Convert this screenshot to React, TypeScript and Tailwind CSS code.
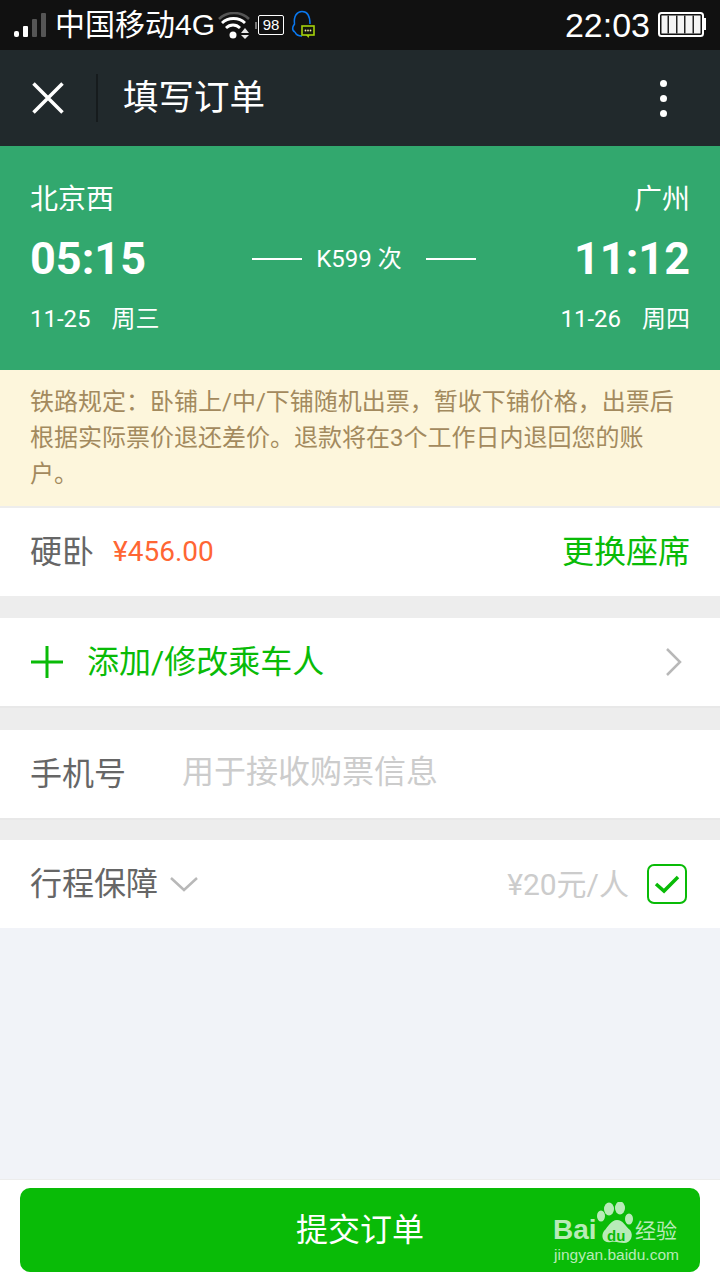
import React from "react";

const cjk = "font-['Roboto','Noto_Sans_CJK_SC',sans-serif]";

function Signal() {
  return (
    <svg width="34" height="28" viewBox="0 0 34 28" className="ml-[13px]">
      <rect x="1" y="20" width="5" height="6" rx="2" fill="#fff" />
      <rect x="10" y="15" width="5" height="11" rx="1" fill="#fff" />
      <rect x="19" y="8" width="5" height="18" rx="1" fill="#555" />
      <rect x="28" y="2" width="5" height="24" rx="1" fill="#555" />
    </svg>
  );
}

function Wifi() {
  return (
    <svg width="32" height="28" viewBox="0 0 32 28" className="ml-[3px] mt-[1px]">
      <path d="M1 7 C9 -1 23 -1 31 7" stroke="#555" strokeWidth="2.500" fill="none" />
      <path d="M4 11 C10 5 21 5 27 11" stroke="#fff" strokeWidth="2.800" fill="none" />
      <path d="M8 16 C12 12 18 12 22 16" stroke="#fff" strokeWidth="2.800" fill="none" />
      <circle cx="15" cy="23" r="3.500" fill="#fff" />
      <path d="M23 21 L27 16 L31 21 Z M23 23 L31 23 L27 27 Z" fill="#e8e8e8" />
    </svg>
  );
}

function Qq() {
  return (
    <svg width="26" height="30" viewBox="0 0 26 30" className="ml-[7px]">
      <path d="M4 22 C0 20 2 16 3.500 14 C2.500 6 6 1.500 11 1.500 C16 1.500 19 6 19 14" stroke="#0a78ef" strokeWidth="1.500" fill="none" />
      <path d="M4 22 C5 25 8 26 11 26" stroke="#0a78ef" strokeWidth="1.500" fill="none" />
      <rect x="11" y="16" width="12" height="9" fill="#15170c" stroke="#a6d20a" strokeWidth="1.600" />
      <path d="M15 25 L17.500 28 L18.500 25 Z" fill="#a6d20a" />
      <circle cx="14.500" cy="20.500" r="0.900" fill="#e8e8a0" />
      <circle cx="17" cy="20.500" r="0.900" fill="#e8e8a0" />
      <circle cx="19.500" cy="20.500" r="0.900" fill="#e8e8a0" />
    </svg>
  );
}

function Battery() {
  return (
    <svg width="48" height="26" viewBox="0 0 48 26" className="ml-[8px]">
      <rect x="1" y="1" width="44" height="23" rx="2.500" fill="none" stroke="#fff" strokeWidth="2" />
      <rect x="45" y="6" width="3" height="12" fill="#fff" />
      <rect x="3.500" y="3.500" width="39" height="18" fill="#f4f4f4" />
      <rect x="9.500" y="3.500" width="1.500" height="18" fill="#222" />
      <rect x="18" y="3.500" width="1.500" height="18" fill="#222" />
      <rect x="26" y="3.500" width="1.500" height="18" fill="#222" />
      <rect x="34.500" y="3.500" width="1.500" height="18" fill="#222" />
    </svg>
  );
}

function Row({ children, className = "" }: { children: React.ReactNode; className?: string }) {
  return <div className={`h-[88px] bg-white flex items-center ${className}`}>{children}</div>;
}

export default function App() {
  return (
    <div className={`w-[720px] h-[1280px] bg-[#f1f3f8] flex flex-col overflow-hidden ${cjk}`}>
      <div className="h-[50px] bg-[#111111] flex items-center text-white shrink-0">
        <Signal />
        <span className="ml-[8px] text-[30px] leading-none whitespace-nowrap font-['Liberation_Sans','Noto_Sans_CJK_SC',sans-serif]">中国移动4G</span>
        <Wifi />
        <div className="ml-[5px] w-[2px] h-[7px] bg-[#777777]" />
        <div className="ml-[1px] w-[26px] h-[20px] border border-white rounded-[2px] text-[15px] leading-[18px] text-center font-['Liberation_Sans',sans-serif]">98</div>
        <Qq />
        <span className="ml-auto text-[34px] leading-none font-['Liberation_Sans',sans-serif]">22:03</span>
        <Battery />
        <div className="w-[14px]" />
      </div>

      <div className="h-[96px] bg-[#21292c] flex items-center shrink-0">
        <svg width="32" height="32" viewBox="0 0 32 32" className="ml-[32px]">
          <path d="M1.500 1.500 L30.500 30.500 M30.500 1.500 L1.500 30.500" stroke="#fff" strokeWidth="3.500" />
        </svg>
        <div className="ml-[32px] w-[2px] h-[48px] bg-[#161b1d]" />
        <span className="ml-[25px] mt-[2px] text-[35.500px] leading-none text-white">填写订单</span>
        <div className="ml-auto mr-[53px] flex flex-col gap-[8px]">
          <div className="w-[7px] h-[7px] rounded-full bg-white" />
          <div className="w-[7px] h-[7px] rounded-full bg-white" />
          <div className="w-[7px] h-[7px] rounded-full bg-white" />
        </div>
      </div>

      <div className="h-[224px] bg-[#32a86e] text-white px-[30px] pt-[37px] shrink-0">
        <div className="flex justify-between text-[28px] leading-[34px]">
          <span>北京西</span>
          <span>广州</span>
        </div>
        <div className="flex items-center justify-between mt-[13px] h-[56px]">
          <span className="text-[45px] leading-none font-bold font-['Roboto',sans-serif]">05:15</span>
          <div className="flex items-center text-[24px] pl-[8px] mt-[2px]">
            <div className="w-[50px] h-[2px] bg-white" />
            <span className="mx-[14px]">K599 次</span>
            <div className="ml-[10px] w-[50px] h-[2px] bg-white" />
          </div>
          <span className="text-[45px] leading-none font-bold font-['Roboto',sans-serif]">11:12</span>
        </div>
        <div className="flex justify-between text-[24px] leading-[30px] mt-[18px]">
          <span className="flex gap-[21px]"><span>11-25</span><span>周三</span></span>
          <span className="flex gap-[21px]"><span className="ml-[-3px]">11-26</span><span>周四</span></span>
        </div>
      </div>

      <div className="h-[136px] bg-[#fdf6dc] px-[30px] pt-[14px] text-[24px] leading-[36px] text-[#a38a5e] shrink-0">
        铁路规定：卧铺上/中/下铺随机出票，暂收下铺价格，出票后<br />
        根据实际票价退还差价。退款将在3个工作日内退回您的账<br />
        户。
      </div>
      <div className="h-[2px] bg-[#ededed] shrink-0" />

      <Row className="px-[30px] shrink-0">
        <span className="text-[32px] text-[#666666]">硬卧</span>
        <span className="ml-[19px] text-[28px] text-[#ff6633]">¥456.00</span>
        <span className="ml-auto text-[32px] text-[#09bb07]">更换座席</span>
      </Row>
      <div className="h-[22px] bg-[#ededed] shrink-0" />

      <Row className="shrink-0">
        <svg width="32" height="32" viewBox="0 0 32 32" className="ml-[31px]">
          <path d="M0 16 H32 M16 0 V32" stroke="#09bb07" strokeWidth="3" />
        </svg>
        <span className="ml-[24px] text-[32px] text-[#09bb07]">添加/修改乘车人</span>
        <svg width="18" height="30" viewBox="0 0 18 30" className="ml-auto mr-[37px]">
          <path d="M2 2 L15 15 L2 28" stroke="#b8b8b8" strokeWidth="2.500" fill="none" />
        </svg>
      </Row>
      <div className="h-[2px] bg-[#e8e8e8] shrink-0" />
      <div className="h-[22px] bg-[#ededed] shrink-0" />

      <Row className="px-[30px] shrink-0">
        <span className="text-[32px] text-[#666666]">手机号</span>
        <span className="ml-[56px] mb-[4px] text-[32px] text-[#cccccc]">用于接收购票信息</span>
      </Row>
      <div className="h-[2px] bg-[#e8e8e8] shrink-0" />
      <div className="h-[20px] bg-[#ededed] shrink-0" />

      <Row className="shrink-0">
        <span className="ml-[30px] text-[32px] text-[#666666]">行程保障</span>
        <svg width="30" height="16" viewBox="0 0 30 16" className="ml-[11px]">
          <path d="M2 2 L15 14 L28 2" stroke="#b8b8b8" strokeWidth="2.500" fill="none" />
        </svg>
        <span className="ml-auto text-[30px] text-[#cccccc]">¥20元/人</span>
        <div className="ml-[18px] mr-[33px] w-[40px] h-[40px] border-2 border-[#09bb07] rounded-[7px] flex items-center justify-center">
          <svg width="26" height="20" viewBox="0 0 26 20">
            <path d="M2 10 L10 17 L24 3" stroke="#09bb07" strokeWidth="3.500" fill="none" />
          </svg>
        </div>
      </Row>

      <div className="flex-1" />

      <div className="h-[101px] bg-white border-t border-[#ececec] px-[20px] pt-[8px] shrink-0">
        <div className="relative h-[84px] bg-[#09bb07] rounded-[10px] flex items-center justify-center text-white text-[32px]">
          提交订单
          <div className="absolute left-[533px] top-[15px] w-[130px] h-[62px] text-[#b8ebb8]">
            <svg width="38" height="42" viewBox="0 0 38 42" className="absolute left-[44px] top-[-1px]">
              <ellipse cx="4" cy="14" rx="4" ry="5.500" fill="#b8ebb8" />
              <ellipse cx="12" cy="7" rx="5" ry="6.500" fill="#b8ebb8" />
              <ellipse cx="23" cy="6" rx="5" ry="6.500" fill="#b8ebb8" />
              <ellipse cx="32" cy="17" rx="4" ry="5.500" fill="#b8ebb8" />
              <path d="M20 18 C26 18 28 24 33 28 C37 33 34 41 27 41 C23 41 19 39 14 40 C7 42 3 35 7 29 C11 25 14 18 20 18 Z" fill="#b8ebb8" />
            </svg>
            <span className="absolute left-0 top-[13px] text-[28px] leading-[28px] font-bold font-['Liberation_Sans',sans-serif]">Bai</span>
            <span className="absolute left-[54px] top-[26px] text-[15px] leading-[14px] font-bold text-[#09bb07] font-['Liberation_Sans',sans-serif]">du</span>
            <span className="absolute left-[82px] top-[16px] text-[21px] leading-[24px] whitespace-nowrap">经验</span>
            <span className="absolute left-[1px] top-[42px] text-[15.500px] leading-[20px] whitespace-nowrap font-['Liberation_Sans',sans-serif]">jingyan.baidu.com</span>
          </div>
        </div>
      </div>
    </div>
  );
}
